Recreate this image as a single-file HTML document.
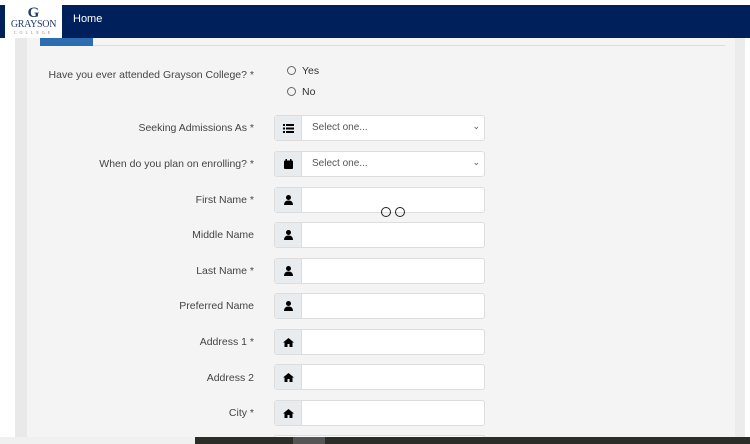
<html style="overflow:hidden;width:750px;height:444px"><head><style>
body{margin:0;width:750px;height:444px;overflow:hidden;background:#fff;font-family:"Liberation Sans",sans-serif;position:relative}
.nav{position:absolute;left:0;top:5px;width:750px;height:33px;background:#00205c}
.logo{position:absolute;left:5px;top:5px;width:57px;height:33px;background:#fff;text-align:center;font-family:"Liberation Serif",serif;color:#1f3a6e}
.side{position:absolute;top:38px;height:406px;background:#e9e9e9}
.panel{position:absolute;left:27px;top:38px;width:708px;height:406px;background:#f4f4f4}
.lbl{position:absolute;right:496px;font-size:10.5px;color:#444;text-align:right;white-space:nowrap}
.ig{position:absolute;left:274px;width:209px;height:24px;border:1px solid #ddd;border-radius:3px;background:#fff;overflow:hidden}
.ic{position:absolute;left:0;top:0;width:26px;height:24px;background:#e9ecef;border-right:1px solid #ddd;display:flex;align-items:center;justify-content:center}
.ph{position:absolute;left:37px;top:6px;font-size:10px;color:#555}
.car{position:absolute;right:4px;top:5px;font-size:9px;color:#555}
.radio{position:absolute;left:287px;width:7px;height:7px;border:1px solid #666;border-radius:50%}
.rt{position:absolute;left:302px;font-size:10.5px;color:#333}
</style></head><body>
<div class="nav"><div style="position:absolute;left:73px;top:8px;color:#fff;font-size:11px">Home</div></div>
<div class="logo"><div style="font-size:15px;font-weight:bold;line-height:14px;margin-top:1px">G</div><div style="font-size:10px;line-height:10px;letter-spacing:-.3px">GRAYSON</div><div style="font-size:4px;letter-spacing:3px;line-height:5px;color:#888">COLLEGE</div></div>
<div class="side" style="left:15px;width:12px"></div>
<div class="panel"></div>
<div class="side" style="left:735px;width:10px;background:#ececec"></div>
<div style="position:absolute;left:40px;top:38px;width:53px;height:8px;background:#2c6cb0"></div>
<div style="position:absolute;left:93px;top:45px;width:632px;height:1px;background:#ddd"></div>
<div class="lbl" style="top:69px">Have you ever attended Grayson College? *</div>
<div class="radio" style="top:66px"></div><div class="rt" style="top:65px">Yes</div>
<div class="radio" style="top:87px"></div><div class="rt" style="top:86px">No</div>

<div class="lbl" style="top:122px">Seeking Admissions As *</div>
<div class="ig" style="top:115px"><div class="ic"><svg width="11" height="9"><rect x="0" y="0" width="2" height="2"/><rect x="3" y="0" width="8" height="2"/><rect x="0" y="3.5" width="2" height="2"/><rect x="3" y="3.5" width="8" height="2"/><rect x="0" y="7" width="2" height="2"/><rect x="3" y="7" width="8" height="2"/></svg></div><div class="ph">Select one...</div><div class="car">&#8964;</div></div>
<div class="lbl" style="top:158px">When do you plan on enrolling? *</div>
<div class="ig" style="top:151px"><div class="ic"><svg width="9" height="10"><rect x="0" y="1.5" width="9" height="8.5" rx="1"/><rect x="1.5" y="0" width="1.5" height="2"/><rect x="6" y="0" width="1.5" height="2"/></svg></div><div class="ph">Select one...</div><div class="car">&#8964;</div></div>

<div class="lbl" style="top:194px">First Name *</div>
<div class="ig" style="top:187px"><div class="ic"><svg width="9" height="10"><circle cx="4.5" cy="2.5" r="2.5"/><path d="M0 10Q0 5.5 4.5 5.5Q9 5.5 9 10Z"/></svg></div></div>
<div class="lbl" style="top:229px">Middle Name</div>
<div class="ig" style="top:222px"><div class="ic"><svg width="9" height="10"><circle cx="4.5" cy="2.5" r="2.5"/><path d="M0 10Q0 5.5 4.5 5.5Q9 5.5 9 10Z"/></svg></div></div>
<div class="lbl" style="top:265px">Last Name *</div>
<div class="ig" style="top:258px"><div class="ic"><svg width="9" height="10"><circle cx="4.5" cy="2.5" r="2.5"/><path d="M0 10Q0 5.5 4.5 5.5Q9 5.5 9 10Z"/></svg></div></div>
<div class="lbl" style="top:300px">Preferred Name</div>
<div class="ig" style="top:293px"><div class="ic"><svg width="9" height="10"><circle cx="4.5" cy="2.5" r="2.5"/><path d="M0 10Q0 5.5 4.5 5.5Q9 5.5 9 10Z"/></svg></div></div>
<div class="lbl" style="top:336px">Address 1 *</div>
<div class="ig" style="top:329px"><div class="ic"><svg width="11" height="9"><path d="M5.5 0L11 4.5H9.5V9H6.5V6H4.5V9H1.5V4.5H0Z"/></svg></div></div>
<div class="lbl" style="top:372px">Address 2</div>
<div class="ig" style="top:364px"><div class="ic"><svg width="11" height="9"><path d="M5.5 0L11 4.5H9.5V9H6.5V6H4.5V9H1.5V4.5H0Z"/></svg></div></div>
<div class="lbl" style="top:407px">City *</div>
<div class="ig" style="top:400px"><div class="ic"><svg width="11" height="9"><path d="M5.5 0L11 4.5H9.5V9H6.5V6H4.5V9H1.5V4.5H0Z"/></svg></div></div>
<div class="ig" style="top:435px;height:2px"></div>

<div style="position:absolute;left:381px;top:207px;width:8px;height:8px;border:1px solid #222;border-radius:50%"></div>
<div style="position:absolute;left:395px;top:207px;width:8px;height:8px;border:1px solid #222;border-radius:50%"></div>
<div style="position:absolute;left:0;top:437px;width:195px;height:7px;background:#f0f0f0"></div>
<div style="position:absolute;left:195px;top:437px;width:555px;height:7px;background:#2a2d28"></div>
<div style="position:absolute;left:293px;top:437px;width:32px;height:7px;background:#555"></div>
</body></html>
